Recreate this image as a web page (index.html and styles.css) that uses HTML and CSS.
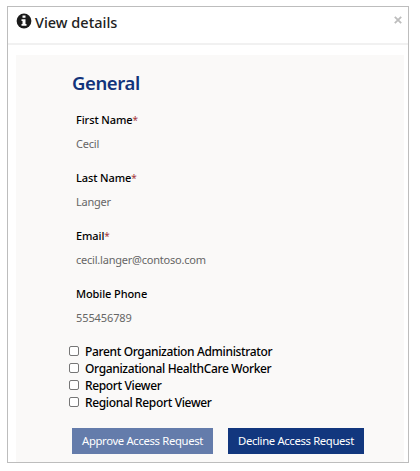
FILE: index.html
```html
<!DOCTYPE html>
<html lang="en">
<head>
<meta charset="utf-8">
<title>View details</title>
<link rel="stylesheet" href="styles.css">
</head>
<body>
<section class="modal">
  <header class="modal-header">
    <svg class="info" viewBox="0 0 16 16" aria-hidden="true"><circle cx="8" cy="8" r="7.4" fill="#1b1b1b"/><path fill="#fff" d="M6.5 2.5h3v2.2h-3zM5.5 6.2h4v4.9h1v1.7h-5v-1.7h1V7.9h-1z"/></svg>
    <h1 class="title">View details</h1>
    <svg class="close" viewBox="0 0 8 8" aria-label="Close"><path d="M.8.8l6.4 6.4M7.2.8L.8 7.2" stroke="#bdbdbd" stroke-width="1.8"/></svg>
  </header>
  <main class="panel">
    <h2 class="heading">General</h2>
    <dl class="fields">
      <div class="field"><dt>First Name<span class="req">*</span></dt><dd>Cecil</dd></div>
      <div class="field"><dt>Last Name<span class="req">*</span></dt><dd>Langer</dd></div>
      <div class="field"><dt>Email<span class="req">*</span></dt><dd>cecil.langer@contoso.com</dd></div>
      <div class="field"><dt>Mobile Phone</dt><dd class="number">555456789</dd></div>
    </dl>
    <div class="roles">
      <label class="role"><input type="checkbox"><span>Parent Organization Administrator</span></label>
      <label class="role"><input type="checkbox"><span>Organizational HealthCare Worker</span></label>
      <label class="role"><input type="checkbox"><span>Report Viewer</span></label>
      <label class="role"><input type="checkbox"><span>Regional Report Viewer</span></label>
    </div>
    <div class="actions">
      <button class="btn approve">Approve Access Request</button>
      <button class="btn decline">Decline Access Request</button>
    </div>
  </main>
</section>
</body>
</html>
```

FILE: styles.css
```css
* { box-sizing: border-box; }
body { margin: 0; padding: 6px 0 0 7px; background: #fff; font-family: "Noto Sans", sans-serif; overflow: hidden; }
.modal { width: 402px; height: 457px; border: 1px solid #bdbdbd; background: #fff; }
.modal-header { height: 38px; display: flex; align-items: flex-start; padding: 6px 6px 0 8px; border-bottom: 2px solid #f1f1f1; }
.info { width: 16px; height: 16px; flex: none; }
.title { margin: -1px 0 0 3px; font-size: 14.5px; line-height: 20px; font-weight: 500; color: #222; white-space: nowrap; flex: 1; }
.close { width: 8px; height: 8px; margin-top: 3px; flex: none; }
.panel { width: 388px; height: 407px; margin: 10px 0 0 8px; padding: 15px 0 0 56px; background: #faf9f8; }
.heading { margin: 0; font-size: 18.5px; line-height: 26px; font-weight: 600; letter-spacing: -.4px; color: #12337b; }
.fields { margin: 15px 0 0 4px; }
.field { height: 58px; }
dt, dd { height: 18px; margin: 0; font-size: 11px; line-height: 18px; white-space: nowrap; }
dt { font-weight: 500; letter-spacing: -.1px; color: #000; }
dd { margin-top: 6px; letter-spacing: -.22px; color: #666; }
.number { letter-spacing: -.1px; }
.req { color: #a4373a; font-size: 10px; font-weight: 400; }
.roles { margin-top: 0; }
.role { display: flex; align-items: center; height: 17px; margin-left: -3px; font-size: 12px; line-height: 17px; font-weight: 500; letter-spacing: -.35px; color: #000; white-space: nowrap; }
.role input { appearance: none; flex: none; width: 10px; height: 10px; margin: 0 6px 2px 0; border: 1px solid #767676; border-radius: 2px; background: #fff; }
.actions { display: flex; gap: 15px; margin-top: 17px; }
.btn { height: 26px; border: 0; padding: 0; font: 400 11.3px/26px "Noto Sans", sans-serif; letter-spacing: -.35px; color: #fff; white-space: nowrap; }
.approve { width: 141px; background: #647cab; }
.decline { width: 136px; background: #12377e; }
```
